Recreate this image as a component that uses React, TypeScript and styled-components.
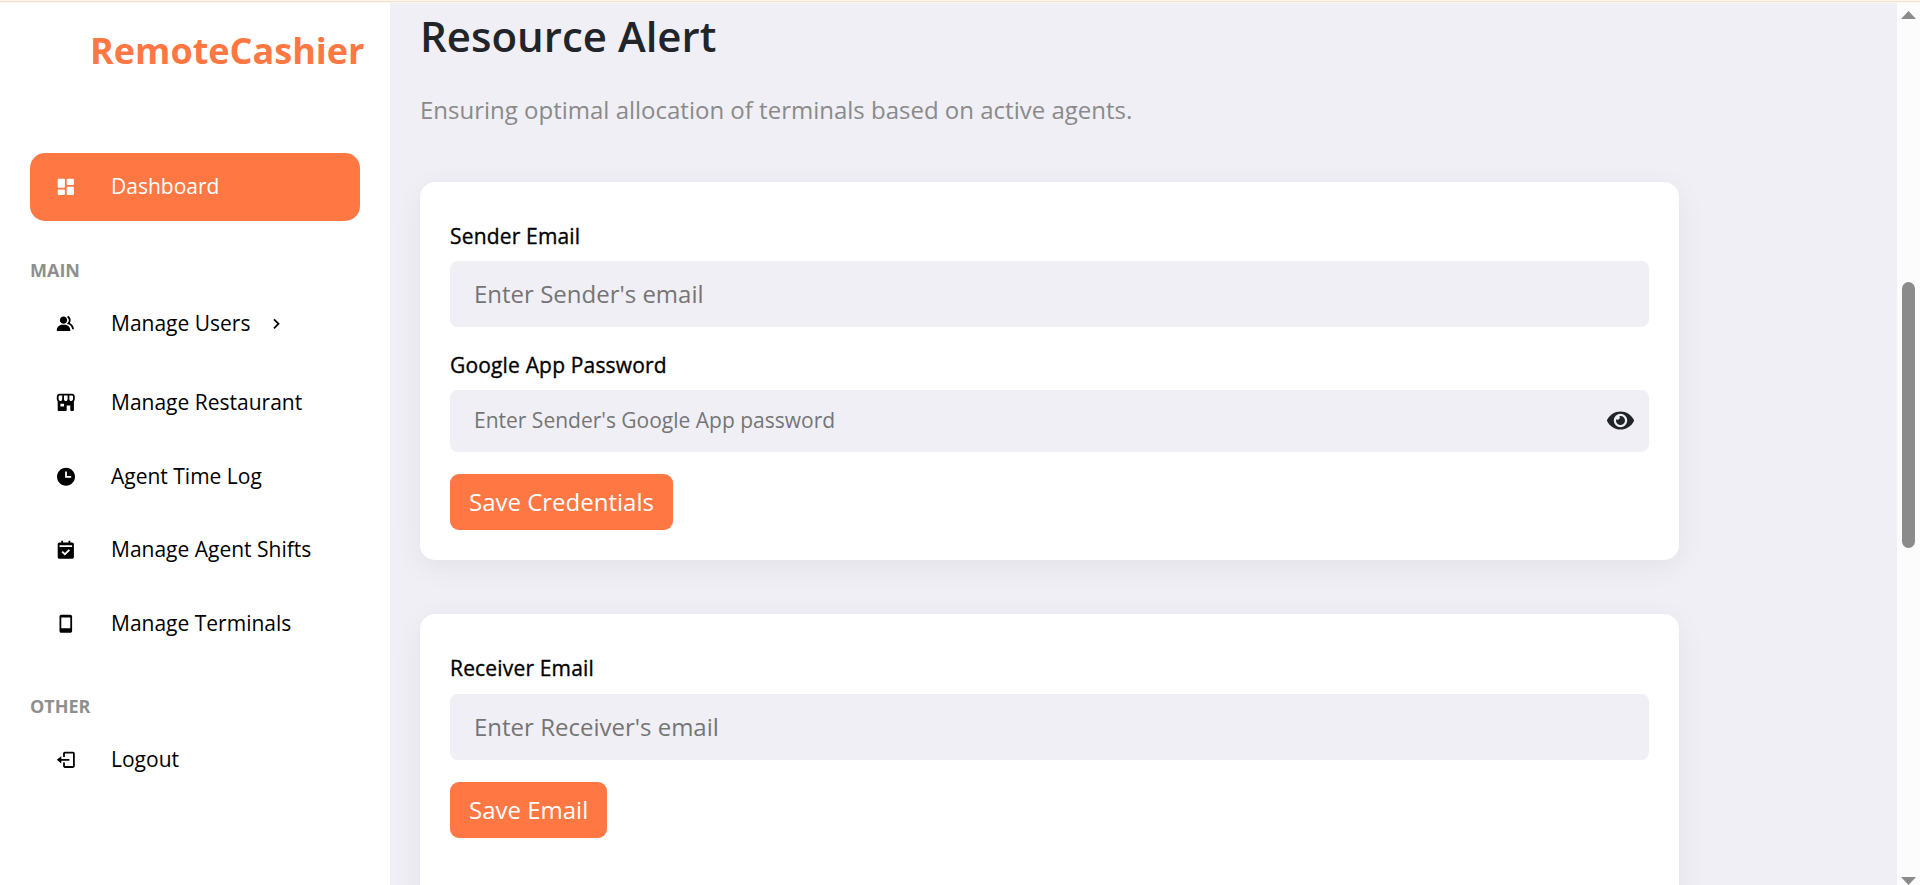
import React from 'react';
import styled, { createGlobalStyle, css } from 'styled-components';
import type { IconType } from 'react-icons';
import {
  BiChevronRight,
  BiLogOut,
  BiMobile,
  BiSolidCalendarCheck,
  BiSolidDashboard,
  BiSolidGroup,
  BiSolidStoreAlt,
  BiSolidTime,
} from 'react-icons/bi';
import { FaEye } from 'react-icons/fa';

const accent = '#ff7743';
const surface = '#f0eff5';

const GlobalStyle = createGlobalStyle`
  *, *::before, *::after { box-sizing: border-box; }
  body {
    margin: 0;
    overflow: hidden;
    font-family: "Open Sans", sans-serif;
    color: #212529;
  }
`;

const Page = styled.div`
  display: flex;
  flex-direction: column;
  height: 885px;
  overflow: hidden;
`;

const TopLine = styled.div`
  flex: none;
  height: 3px;
  background: linear-gradient(#fff8f2 0 1px, #f5e1cb 1px 2px, #fff6f0 2px 3px);
`;

const Body = styled.div`
  display: flex;
  flex: 1;
  min-height: 0;
`;

const Sidebar = styled.aside`
  flex: none;
  width: 390px;
  padding: 23px 30px 0;
  background: #fff;
`;

const Logo = styled.div`
  height: 49px;
  margin: 0 -10px 78px 60px;
  font-size: 36px;
  font-weight: 700;
  line-height: 49px;
  color: ${accent};
  white-space: nowrap;
`;

const SectionLabel = styled.h2<{ $gap: number }>`
  height: 30px;
  margin: ${(p) => p.$gap}px 0 5px;
  font-size: 18px;
  font-weight: 700;
  line-height: 30px;
  color: #8f8f8f;
`;

const NavList = styled.nav`
  display: flex;
  flex-direction: column;
  gap: 5.5px;
`;

const NavItem = styled.a<{ $active?: boolean; $spaced?: boolean }>`
  display: flex;
  align-items: center;
  height: 68px;
  padding-left: 25px;
  border-radius: 15px;
  font-size: 21px;
  color: #000;
  ${(p) => p.$active && css`
    background: ${accent};
    color: #fff;
  `}
  ${(p) => p.$spaced && css`
    margin-bottom: 5.5px;
  `}
`;

const NavIcon = styled.span`
  display: flex;
  width: 56px;
  padding-left: 0.4px;
  font-size: 21.6px;
`;

const NavText = styled.span`
  line-height: 30px;
  padding-bottom: 2px;
`;

const Chevron = styled.span`
  display: flex;
  margin-left: 15px;
  font-size: 21.6px;
`;

const Content = styled.main`
  flex: 1;
  min-width: 0;
  padding: 3px 30px 0;
  background: ${surface};
`;

const Title = styled.h1`
  height: 60px;
  margin: 0;
  font-size: 42px;
  font-weight: 600;
  line-height: 60px;
`;

const Subtitle = styled.p`
  height: 36px;
  margin: 26px 0 54px;
  font-size: 24px;
  line-height: 36px;
  color: #8a8a8a;
`;

const Card = styled.section`
  width: 1259px;
  height: 378px;
  margin-bottom: 54px;
  padding: 38px 30px 30px;
  border-radius: 15px;
  background: #fff;
  box-shadow: 0 7px 30px rgba(0, 0, 0, 0.06);
`;

/* A hairline stroke gives the label its medium weight. */
const Label = styled.label<{ $gap?: number }>`
  display: block;
  height: 32px;
  margin-bottom: ${(p) => p.$gap ?? 10}px;
  font-size: 21px;
  font-weight: 500;
  line-height: 32px;
  letter-spacing: 0.17px;
  -webkit-text-stroke: 0.35px #000;
  color: #000;
`;

const Field = styled.div<{ $compact?: boolean }>`
  display: flex;
  align-items: center;
  height: ${(p) => (p.$compact ? 62 : 66)}px;
  margin-bottom: 22px;
  padding: 0 15px 0 24px;
  border-radius: 7.5px;
  background: ${surface};
  font-size: ${(p) => (p.$compact ? 21 : 24)}px;
`;

const Input = styled.input`
  flex: 1;
  min-width: 0;
  padding: 0 0 2px;
  border: 0;
  outline: 0;
  background: transparent;
  font: inherit;
  &::placeholder { color: #757575; }
`;

const Reveal = styled.span`
  display: flex;
  padding-bottom: 1px;
  font-size: 27px;
  color: #212529;
`;

const Button = styled.button`
  display: block;
  height: 56px;
  padding: 0 19px;
  border: 0;
  border-radius: 9px;
  background: ${accent};
  color: #fff;
  font: 24px/56px "Open Sans", sans-serif;
`;

const Scrollbar = styled.div`
  display: flex;
  flex-direction: column;
  flex: none;
  align-items: center;
  width: 23px;
  padding-top: 8px;
  background: #fcfcfc;
  color: #8b8b8b;
`;

const Thumb = styled.div`
  width: 13px;
  height: 266px;
  margin: 263px 0 329px;
  border-radius: 6.5px;
  background: #8b8b8b;
`;

const ArrowIcon = styled.svg`
  flex: none;
`;

const Arrow = ({ down }: { down?: boolean }) => (
  <ArrowIcon width="15" height="8" viewBox="0 0 15 8">
    <path d={down ? 'M0 0h15L7.5 8z' : 'M0 8h15L7.5 0z'} fill="currentColor" />
  </ArrowIcon>
);

interface Entry {
  label: string;
  icon: IconType;
  expandable?: boolean;
}

const mainEntries: Entry[] = [
  { label: 'Manage Users', icon: BiSolidGroup, expandable: true },
  { label: 'Manage Restaurant', icon: BiSolidStoreAlt },
  { label: 'Agent Time Log', icon: BiSolidTime },
  { label: 'Manage Agent Shifts', icon: BiSolidCalendarCheck },
  { label: 'Manage Terminals', icon: BiMobile },
];

const NavRow = ({ entry, active }: { entry: Entry; active?: boolean }) => {
  const Icon = entry.icon;
  return (
    <NavItem $active={active} $spaced={entry.expandable}>
      <NavIcon><Icon /></NavIcon>
      <NavText>{entry.label}</NavText>
      {entry.expandable && <Chevron><BiChevronRight /></Chevron>}
    </NavItem>
  );
};

export default function App() {
  return (
    <>
      <GlobalStyle />
      <Page>
        <TopLine />
        <Body>
          <Sidebar>
            <Logo>RemoteCashier</Logo>
            <NavRow entry={{ label: 'Dashboard', icon: BiSolidDashboard }} active />
            <SectionLabel $gap={34}>MAIN</SectionLabel>
            <NavList>
              {mainEntries.map((entry) => <NavRow key={entry.label} entry={entry} />)}
            </NavList>
            <SectionLabel $gap={33}>OTHER</SectionLabel>
            <NavRow entry={{ label: 'Logout', icon: BiLogOut }} />
          </Sidebar>
          <Content>
            <Title>Resource Alert</Title>
            <Subtitle>Ensuring optimal allocation of terminals based on active agents.</Subtitle>
            <Card>
              <Label htmlFor="sender" $gap={9}>Sender Email</Label>
              <Field><Input id="sender" type="email" placeholder="Enter Sender's email" /></Field>
              <Label htmlFor="password" $gap={9}>Google App Password</Label>
              <Field $compact>
                <Input id="password" type="password" placeholder="Enter Sender's Google App password" />
                <Reveal><FaEye /></Reveal>
              </Field>
              <Button>Save Credentials</Button>
            </Card>
            <Card>
              <Label htmlFor="receiver">Receiver Email</Label>
              <Field><Input id="receiver" type="email" placeholder="Enter Receiver's email" /></Field>
              <Button>Save Email</Button>
            </Card>
          </Content>
          <Scrollbar>
            <Arrow />
            <Thumb />
            <Arrow down />
          </Scrollbar>
        </Body>
      </Page>
    </>
  );
}
